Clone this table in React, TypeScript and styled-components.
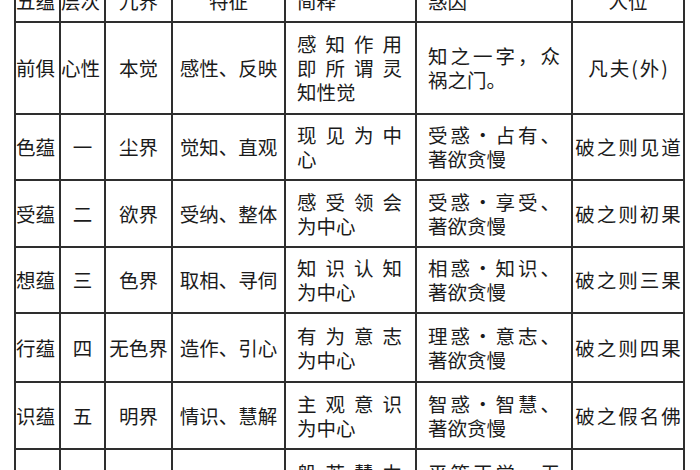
import React from 'react'
import styled, { createGlobalStyle } from 'styled-components'

const GlobalStyle = createGlobalStyle`
  html, body {
    margin: 0;
    padding: 0;
    background: #ffffff;
    overflow: hidden;
  }
  body {
    width: 700px;
    height: 470px;
    font-family: "Noto Sans CJK SC", "Noto Sans", sans-serif;
    color: #1b1b1b;
  }
`

const Page = styled.div`
  width: 700px;
  height: 470px;
  overflow: hidden;
  padding-left: 14px;
  box-sizing: border-box;
`

// the lines of the table are the grid background showing through the gaps
const Table = styled.div`
  display: grid;
  grid-template-columns: 43px 43px 65px 111px 129px 154px 110px;
  grid-template-rows: 40px 90px 64px 65px 64px 67px 65px 70px;
  gap: 2px;
  padding: 2px;
  width: max-content;
  margin-top: -21px;
  background: #2e2e2e;
`

const Cell = styled.div<{ $align?: 'center' | 'text'; $pad?: number }>`
  background: #ffffff;
  display: flex;
  flex-direction: column;
  justify-content: center;
  align-items: ${p => (p.$align === 'text' ? 'stretch' : 'center')};
  padding: ${p => (p.$align === 'text' ? `0 ${p.$pad ?? 13}px 0 11px` : '0')};
  font-size: 19.5px;
  line-height: 24px;
  white-space: nowrap;
  overflow: hidden;
`

const Line = styled.div<{ $spread?: boolean }>`
  display: flex;
  justify-content: ${p => (p.$spread ? 'space-between' : 'flex-start')};
  height: 24px;
`

const Wide = styled.span`
  letter-spacing: 2px;
  margin-right: -2px;
`

const Edge = styled.span`
  align-self: flex-start;
`

type Row = {
  skandha: string
  level: string
  realm: string
  trait: string
  note: string[]
  cause: string[]
  person: string
}

const rows: Row[] = [
  { skandha: '前俱', level: '心性', realm: '本觉', trait: '感性、反映', note: ['感知作用', '即所谓灵', '知性觉'], cause: ['知之一字，众', '祸之门。'], person: '凡夫(外)' },
  { skandha: '色蕴', level: '一', realm: '尘界', trait: '觉知、直观', note: ['现见为中', '心'], cause: ['受惑·占有、', '著欲贪慢'], person: '破之则见道' },
  { skandha: '受蕴', level: '二', realm: '欲界', trait: '受纳、整体', note: ['感受领会', '为中心'], cause: ['受惑·享受、', '著欲贪慢'], person: '破之则初果' },
  { skandha: '想蕴', level: '三', realm: '色界', trait: '取相、寻伺', note: ['知识认知', '为中心'], cause: ['相惑·知识、', '著欲贪慢'], person: '破之则三果' },
  { skandha: '行蕴', level: '四', realm: '无色界', trait: '造作、引心', note: ['有为意志', '为中心'], cause: ['理惑·意志、', '著欲贪慢'], person: '破之则四果' },
  { skandha: '识蕴', level: '五', realm: '明界', trait: '情识、慧解', note: ['主观意识', '为中心'], cause: ['智惑·智慧、', '著欲贪慢'], person: '破之假名佛' },
  { skandha: '', level: '', realm: '', trait: '', note: ['般若慧力', '为中心'], cause: ['平等正觉·无', '著欲贪慢'], person: '' },
]

function Lines({ lines }: { lines: string[] }) {
  return (
    <>
      {lines.map((text, i) => {
        const spread = i < lines.length - 1
        return (
          <Line key={i} $spread={spread}>
            {spread ? Array.from(text).map((ch, j) => <span key={j}>{ch}</span>) : text}
          </Line>
        )
      })}
    </>
  )
}

export default function App() {
  return (
    <>
      <GlobalStyle />
      <Page>
        <Table>
          <Cell><Edge>五蕴</Edge></Cell>
          <Cell><Edge>层次</Edge></Cell>
          <Cell>九界</Cell>
          <Cell>特征</Cell>
          <Cell $align="text"><Line>简释</Line></Cell>
          <Cell $align="text"><Line>惑因</Line></Cell>
          <Cell>人位</Cell>

          {rows.map((r, i) => (
            <React.Fragment key={i}>
              <Cell><Edge>{r.skandha}</Edge></Cell>
              <Cell>{r.level.length > 1 ? <Edge>{r.level}</Edge> : r.level}</Cell>
              <Cell>{r.realm}</Cell>
              <Cell>{r.trait}</Cell>
              <Cell $align="text"><Lines lines={r.note} /></Cell>
              <Cell $align="text" $pad={11}><Lines lines={r.cause} /></Cell>
              <Cell>{r.person.length > 4 ? <Wide>{r.person}</Wide> : r.person}</Cell>
            </React.Fragment>
          ))}
        </Table>
      </Page>
    </>
  )
}
